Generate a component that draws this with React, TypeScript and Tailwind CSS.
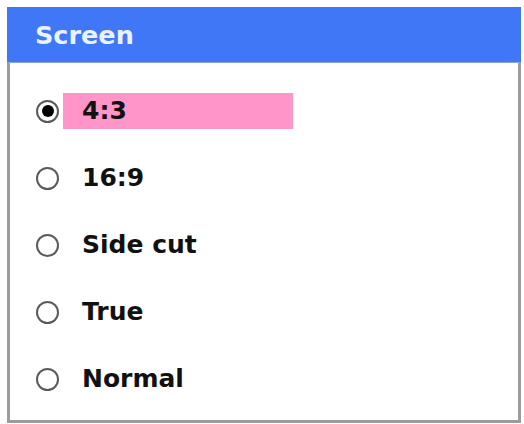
const OPTIONS = ["4:3", "16:9", "Side cut", "True", "Normal"];

function Radio({ on }: { on: boolean }) {
  return (
    <div className="w-[23px] h-[23px] rounded-full border-2 border-[#5a5a5a] bg-white flex items-center justify-center flex-shrink-0">
      {on && <div className="w-[12px] h-[12px] rounded-full bg-black" />}
    </div>
  );
}

export default function App() {
  const selected = 0;
  return (
    <div className="w-[524px] h-[424px] bg-white p-[7px] pb-[1px] pr-[3px] font-['DejaVu_Sans',sans-serif] font-bold">
      <div className="flex flex-col h-full">
        <div className="h-[56px] bg-[#4077f6] flex items-center pl-[28px] pt-[2px] text-[25.5px] text-[#eaf1ff] border-b border-[#8aa4d8]">
          Screen
        </div>
        <div className="flex-1 border-x-[3px] border-b-[3px] border-[#9c9c9c] pt-[30px] flex flex-col gap-[31px]">
          {OPTIONS.map((o, i) => (
            <div key={o} className="flex items-center h-[36px] pl-[26px]">
              <Radio on={i === selected} />
              <div className={`ml-[4px] w-[230px] h-[36px] flex items-center pl-[19px] text-[25px] text-[#111] ${i === selected ? "bg-[#ff95c8]" : ""}`}>
                {o}
              </div>
            </div>
          ))}
        </div>
      </div>
    </div>
  );
}
